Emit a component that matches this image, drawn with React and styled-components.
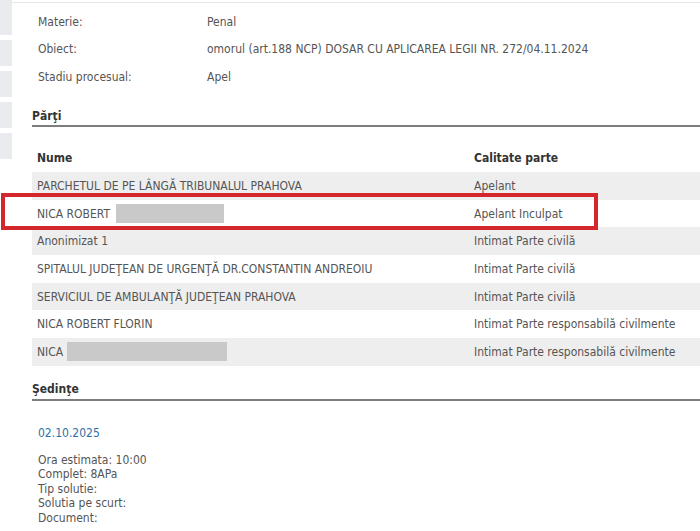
import React from 'react';
import styled, { createGlobalStyle } from 'styled-components';

const Global = createGlobalStyle`
  html, body {
    margin: 0;
    padding: 0;
    background: #fff;
  }
  body {
    font-family: 'DejaVu Sans Condensed', 'DejaVu Sans', sans-serif;
    font-size: 12px;
    color: #555;
  }
`;

const Page = styled.div`
  position: relative;
  display: flex;
  width: 700px;
  height: 531px;
  overflow: hidden;
`;

const Sidebar = styled.div`
  width: 12px;
  display: flex;
  flex-direction: column;
  gap: 5px;
  flex-shrink: 0;
`;

const SideBlock = styled.div`
  height: ${p => p.h || 27}px;
  background: #e9ebef;
`;

const Main = styled.div`
  flex: 1;
  margin-top: 2px;
  border-top: 1px solid #e6e6e6;
  padding: 5px 0 0 20px;
`;

const InfoRow = styled.div`
  display: grid;
  grid-template-columns: 169px 1fr;
  height: 27.5px;
  align-items: center;
  padding-left: 6px;
`;

const Heading = styled.div`
  margin-top: ${p => p.top}px;
  font-weight: bold;
  color: #333;
  padding-bottom: ${p => p.pb}px;
  border-bottom: 2px solid #7d7d7d;
  line-height: 15px;
`;

const Table = styled.div`
  margin-top: ${p => p.top || 0}px;
`;

const Row = styled.div`
  display: grid;
  grid-template-columns: 437px 1fr;
  height: 27.67px;
  align-items: center;
  padding-left: 5px;
  background: ${p => (p.striped ? '#eeeeee' : 'transparent')};
  color: ${p => (p.head ? '#333' : '#555')};
  font-weight: ${p => (p.head ? 'bold' : 'normal')};
`;

const NameCell = styled.div`
  display: flex;
  align-items: center;
  white-space: nowrap;
`;

const Redacted = styled.span`
  display: inline-block;
  width: ${p => p.w}px;
  height: 19px;
  margin-left: ${p => p.gap || 0}px;
  background: #c9c9c9;
`;

const Highlight = styled.div`
  position: absolute;
  left: 1px;
  top: 193px;
  width: 589px;
  height: 29px;
  border: 4px solid #d3272d;
  pointer-events: none;
`;

const Session = styled.div`
  padding: 25px 0 0 6px;
`;

const DateLink = styled.div`
  color: #2a71a9;
  line-height: 15px;
`;

const Details = styled.div`
  margin-top: 12px;
  line-height: 14.5px;
`;

const info = [
  ['Materie:', 'Penal'],
  ['Obiect:', 'omorul (art.188 NCP) DOSAR CU APLICAREA LEGII NR. 272/04.11.2024'],
  ['Stadiu procesual:', 'Apel'],
];

const parties = [
  { name: 'PARCHETUL DE PE LÂNGĂ TRIBUNALUL PRAHOVA', role: 'Apelant' },
  { name: 'NICA ROBERT', role: 'Apelant Inculpat', redact: 108, gap: 6 },
  { name: 'Anonimizat 1', role: 'Intimat Parte civilă' },
  { name: 'SPITALUL JUDEŢEAN DE URGENŢĂ DR.CONSTANTIN ANDREOIU', role: 'Intimat Parte civilă' },
  { name: 'SERVICIUL DE AMBULANŢĂ JUDEŢEAN PRAHOVA', role: 'Intimat Parte civilă' },
  { name: 'NICA ROBERT FLORIN', role: 'Intimat Parte responsabilă civilmente' },
  { name: 'NICA', role: 'Intimat Parte responsabilă civilmente', redact: 160, gap: 4 },
];

export default function App() {
  return (
    <Page>
      <Global />
      <Sidebar>
        <SideBlock h={35} />
        <SideBlock h={26} />
        <SideBlock h={26} />
        <SideBlock h={26} />
        <SideBlock h={26} />
      </Sidebar>
      <Main>
        {info.map(([label, value]) => (
          <InfoRow key={label}>
            <span>{label}</span>
            <span>{value}</span>
          </InfoRow>
        ))}
        <Heading top={18} pb={1}>Părţi</Heading>
        <Table top={18}>
          <Row head>
            <span>Nume</span>
            <span>Calitate parte</span>
          </Row>
          {parties.map((p, i) => (
            <Row key={i} striped={i % 2 === 0}>
              <NameCell>
                {p.name}
                {p.redact && <Redacted w={p.redact} gap={p.gap} />}
              </NameCell>
              <span>{p.role}</span>
            </Row>
          ))}
        </Table>
        <Heading top={16} pb={2}>Şedinţe</Heading>
        <Session>
          <DateLink>02.10.2025</DateLink>
          <Details>
            <div>Ora estimata: 10:00</div>
            <div>Complet: 8APa</div>
            <div>Tip solutie:</div>
            <div>Solutia pe scurt:</div>
            <div>Document:</div>
          </Details>
        </Session>
      </Main>
      <Highlight />
    </Page>
  );
}
